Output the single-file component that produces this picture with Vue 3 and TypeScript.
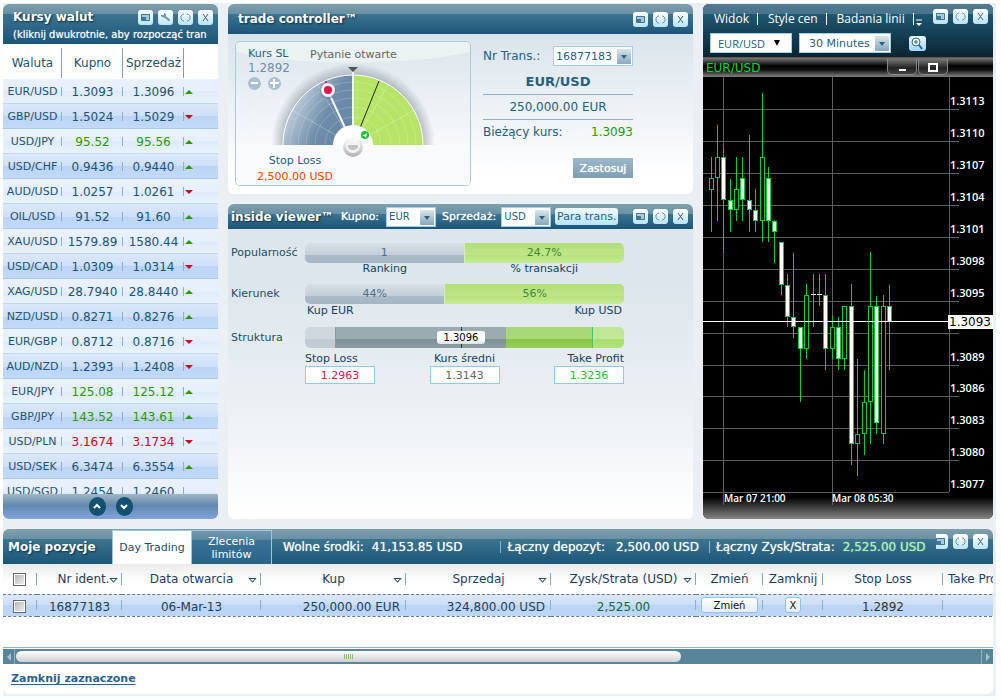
<script setup lang="ts">
import { ref } from 'vue'

interface Quote {
  pair: string
  buy: string
  sell: string
  dir: 'up' | 'down' | ''
  tone?: 'green' | 'red'
}

interface Candle {
  x: number
  high: number
  top: number
  bottom: number
  low: number
  filled: boolean
}

const quotes: Quote[] = [
  { pair: 'EUR/USD', buy: '1.3093', sell: '1.3096', dir: 'up' },
  { pair: 'GBP/USD', buy: '1.5024', sell: '1.5029', dir: 'down' },
  { pair: 'USD/JPY', buy: '95.52', sell: '95.56', dir: 'up', tone: 'green' },
  { pair: 'USD/CHF', buy: '0.9436', sell: '0.9440', dir: 'up' },
  { pair: 'AUD/USD', buy: '1.0257', sell: '1.0261', dir: 'down' },
  { pair: 'OIL/USD', buy: '91.52', sell: '91.60', dir: 'up' },
  { pair: 'XAU/USD', buy: '1579.89', sell: '1580.44', dir: 'up' },
  { pair: 'USD/CAD', buy: '1.0309', sell: '1.0314', dir: 'down' },
  { pair: 'XAG/USD', buy: '28.7940', sell: '28.8440', dir: 'up' },
  { pair: 'NZD/USD', buy: '0.8271', sell: '0.8276', dir: 'up' },
  { pair: 'EUR/GBP', buy: '0.8712', sell: '0.8716', dir: 'down' },
  { pair: 'AUD/NZD', buy: '1.2393', sell: '1.2408', dir: 'down' },
  { pair: 'EUR/JPY', buy: '125.08', sell: '125.12', dir: 'up', tone: 'green' },
  { pair: 'GBP/JPY', buy: '143.52', sell: '143.61', dir: 'up', tone: 'green' },
  { pair: 'USD/PLN', buy: '3.1674', sell: '3.1734', dir: 'down', tone: 'red' },
  { pair: 'USD/SEK', buy: '6.3474', sell: '6.3554', dir: 'up' },
  { pair: 'USD/SGD', buy: '1.2454', sell: '1.2460', dir: '' },
]

const rows: Array<[number, number, number, number, number, 0 | 1]> = [
  [8, 80, 101, 112, 155, 0],
  [14, 48, 80, 100, 144, 0],
  [20, 69, 80, 122, 176, 1],
  [27, 102, 123, 132, 155, 1],
  [33, 80, 112, 132, 144, 0],
  [39, 80, 101, 122, 144, 1],
  [46, 58, 123, 132, 155, 1],
  [52, 112, 133, 143, 155, 1],
  [59, 16, 80, 143, 165, 0],
  [65, 90, 101, 143, 165, 1],
  [71, 143, 144, 154, 186, 1],
  [78, 165, 165, 207, 218, 1],
  [84, 197, 208, 239, 250, 1],
  [90, 176, 240, 249, 261, 1],
  [97, 250, 250, 271, 325, 1],
  [103, 207, 218, 271, 282, 0],
  [122, 197, 218, 271, 293, 1],
  [129, 239, 250, 271, 282, 0],
  [135, 240, 250, 281, 293, 1],
  [141, 229, 229, 281, 293, 0],
  [148, 207, 229, 366, 388, 1],
  [154, 282, 357, 366, 399, 0],
  [161, 293, 325, 356, 378, 0],
  [167, 175, 229, 324, 367, 0],
  [173, 219, 229, 345, 357, 1],
  [180, 218, 229, 356, 367, 0],
  [186, 208, 229, 244, 293, 1],
]
const candles: Candle[] = rows.map(([x, high, top, bottom, low, f]) => ({
  x, high, top, bottom, low, filled: f === 1,
}))

const levels = [
  { y: 32, label: '1.3113' },
  { y: 64, label: '1.3110' },
  { y: 96, label: '1.3107' },
  { y: 128, label: '1.3104' },
  { y: 160, label: '1.3101' },
  { y: 192, label: '1.3098' },
  { y: 224, label: '1.3095' },
  { y: 256, label: '' },
  { y: 288, label: '1.3089' },
  { y: 319, label: '1.3086' },
  { y: 351, label: '1.3083' },
  { y: 383, label: '1.3080' },
  { y: 415, label: '1.3077' },
]

const rings = [28, 38, 47, 55, 63]
const popularity = ref(50)
const direction = ref(44)
const allSelected = ref(false)
const rowSelected = ref(false)
const stopLoss = ref('1.2963')
const average = ref('1.3143')
const takeProfit = ref('1.3236')
</script>

<template>
  <div class="page">
    <div class="desk">
      <main class="top">
        <section class="panel rates">
          <header class="bar rates-bar">
            <div class="bar-row">
              <h2>Kursy walut</h2>
              <div class="tools">
                <button class="tool" aria-label="Okno"><svg viewBox="0 0 15 15"><rect x="3" y="4" width="9" height="7" fill="#a9cadb" /><path d="M3.5 4.5h8v6h-8z" fill="none" stroke="#3f7893" /><path d="M4 7h4v3H4z" fill="#3f7893" /></svg></button>
                <button class="tool" aria-label="Ustawienia"><svg viewBox="0 0 15 15"><path d="M6 6l5 4" stroke="#6f93a8" stroke-width="2" stroke-linecap="round" /><path d="M3 5c0 2 2 3 4 2s1-4-1-4v2H4z" fill="#6f93a8" /></svg></button>
                <button class="tool" aria-label="Powiększ"><svg viewBox="0 0 15 15"><path d="M6 4H5L3 6v3l2 2h1M9 4h1l2 2v3l-2 2H9" fill="none" stroke="#6d93a8" /></svg></button>
                <button class="tool" aria-label="Zamknij"><svg viewBox="0 0 15 15"><path d="M5 4l5 7M10 4l-5 7" fill="none" stroke="#3f6276" /></svg></button>
              </div>
            </div>
            <p class="hint">(kliknij dwukrotnie, aby rozpocząć tran</p>
          </header>
          <div class="rates-list">
            <table class="quotes">
              <colgroup><col class="c1" /><col class="c2" /><col class="c2" /><col /></colgroup>
              <thead>
                <tr><th>Waluta</th><th>Kupno</th><th>Sprzedaż</th><th></th></tr>
              </thead>
              <tbody>
                <tr v-for="q in quotes" :key="q.pair" :class="q.tone">
                  <td class="pair">{{ q.pair }}</td>
                  <td class="num">{{ q.buy }}</td>
                  <td class="num">{{ q.sell }}</td>
                  <td><i v-if="q.dir" :class="['tick', q.dir]"></i></td>
                </tr>
              </tbody>
            </table>
          </div>
          <footer class="rates-foot">
            <button aria-label="W górę"><svg viewBox="0 0 17 19"><path d="M5 11l3-3 3 3" fill="none" stroke="#fff" stroke-width="2" /></svg></button>
            <button aria-label="W dół"><svg viewBox="0 0 17 19"><path d="M5 8l3 3 3-3" fill="none" stroke="#fff" stroke-width="2" /></svg></button>
          </footer>
        </section>

        <div class="middle">
          <section class="panel controller">
            <header class="bar">
              <h2>trade controller™</h2>
              <div class="tools">
                <button class="tool" aria-label="Okno"><svg viewBox="0 0 15 15"><rect x="3" y="4" width="9" height="7" fill="#a9cadb" /><path d="M3.5 4.5h8v6h-8z" fill="none" stroke="#3f7893" /><path d="M4 7h4v3H4z" fill="#3f7893" /></svg></button>
                <button class="tool" aria-label="Powiększ"><svg viewBox="0 0 15 15"><path d="M6 4H5L3 6v3l2 2h1M9 4h1l2 2v3l-2 2H9" fill="none" stroke="#6d93a8" /></svg></button>
                <button class="tool" aria-label="Zamknij"><svg viewBox="0 0 15 15"><path d="M5 4l5 7M10 4l-5 7" fill="none" stroke="#3f6276" /></svg></button>
              </div>
            </header>
            <div class="controller-body">
              <div class="dial">
                <svg class="dial-art" viewBox="0 0 234 144" aria-hidden="true">
                  <defs>
                    <linearGradient id="steel" x1="0" y1="0.2" x2="1" y2="0.7">
                      <stop offset="0.1" stop-color="#d0dbe5" /><stop offset="0.65" stop-color="#6c8ca9" /><stop offset="1" stop-color="#6687a4" />
                    </linearGradient>
                    <radialGradient id="halo" gradientUnits="userSpaceOnUse" cx="117" cy="103" r="82">
                      <stop offset="0.8" stop-color="#56636e" stop-opacity="0.5" /><stop offset="1" stop-color="#56636e" stop-opacity="0" />
                    </radialGradient>
                    <linearGradient id="knob" x1="0" y1="0" x2="0" y2="1">
                      <stop offset="0" stop-color="#fff" /><stop offset="1" stop-color="#b3b1b3" />
                    </linearGradient>
                    <clipPath id="upper"><rect x="0" y="0" width="234" height="103" /></clipPath>
                  </defs>
                  <path d="M0 0H234V10C170 24 64 24 0 10Z" fill="#edf5f3" fill-opacity="0.75" />
                  <rect x="0" y="103" width="234" height="41" fill="#f9fafb" />
                  <g clip-path="url(#upper)">
                    <circle cx="117" cy="103" r="82" fill="url(#halo)" />
                    <path d="M47 103A70 70 0 0 1 117 33V103Z" fill="url(#steel)" />
                    <path d="M117 33A70 70 0 0 1 187 103H117Z" fill="#b6e467" />
                    <circle v-for="r in rings" :key="r" cx="117" cy="103" :r="r" fill="none" stroke="#fff" stroke-opacity="0.2" />
                    <path d="M117 103L49 64M117 103L78 36M117 103L156 36M117 103L185 64" stroke="#fff" stroke-opacity="0.25" />
                    <circle cx="117" cy="103" r="70" fill="none" stroke="#fff" stroke-width="1" />
                  </g>
                  <path d="M117 30V90" stroke="#eef2f4" stroke-width="2" />
                  <path d="M112 25H122L117 30Z" fill="#555" />
                  <path d="M117 103L92 49" stroke="#f3f5f8" stroke-width="2" />
                  <circle cx="92" cy="49" r="8" fill="#55657a" fill-opacity="0.35" />
                  <circle cx="92" cy="48" r="7" fill="#f4f1f3" />
                  <circle cx="92" cy="48" r="4" fill="#e01350" />
                  <circle cx="90" cy="40" r="1" fill="#e01350" />
                  <path d="M124 86L143 39" stroke="#1c2a10" />
                  <g clip-path="url(#upper)"><circle cx="117" cy="103" r="20" fill="#fff" /></g>
                  <circle cx="129" cy="93" r="4" fill="#10c52d" />
                  <path d="M126 94l5-3-1 5-2-2z" fill="#fff" />
                  <circle cx="117" cy="105" r="10" fill="url(#knob)" />
                  <circle cx="117" cy="104" r="7" fill="#f4f3f4" />
                  <path d="M112 103h10v2a5 3 0 0 1-10 0z" fill="#c3c1c3" />
                </svg>
                <div class="dial-head">
                  <div class="dial-rate">
                    <span class="teal">Kurs SL</span>
                    <span class="rate">1.2892</span>
                    <div class="steps">
                      <button aria-label="Zmniejsz"><svg viewBox="0 0 13 13"><path d="M3 6h7" stroke="#fff" stroke-width="2" /></svg></button>
                      <button aria-label="Zwiększ"><svg viewBox="0 0 13 13"><path d="M2 6h9M6 2v9" stroke="#fff" stroke-width="2" /></svg></button>
                    </div>
                  </div>
                  <span class="question">Pytanie otwarte</span>
                </div>
                <div class="dial-foot">
                  <span class="teal">Stop Loss</span>
                  <span class="loss">2,500.00 USD</span>
                </div>
              </div>
              <form class="deal" @submit.prevent>
                <div class="deal-row">
                  <label for="deal-no">Nr Trans.:</label>
                  <span class="pick deal-pick">
                    <select id="deal-no"><option>16877183</option></select><i class="drop"></i>
                  </span>
                </div>
                <strong class="deal-pair">EUR/USD</strong>
                <span class="deal-sum">250,000.00 EUR</span>
                <div class="deal-row deal-now"><span>Bieżący kurs:</span><span class="green-text">1.3093</span></div>
                <button class="apply">Zastosuj</button>
              </form>
            </div>
          </section>

          <section class="panel viewer">
            <header class="bar viewer-bar">
              <h2>inside viewer™</h2>
              <label for="v-buy">Kupno:</label>
              <span class="pick small"><select id="v-buy"><option>EUR</option></select><i class="drop"></i></span>
              <label for="v-sell">Sprzedaż:</label>
              <span class="pick small"><select id="v-sell"><option>USD</option></select><i class="drop"></i></span>
              <button class="pair-btn">Para trans.</button>
              <div class="tools">
                <button class="tool" aria-label="Okno"><svg viewBox="0 0 15 15"><rect x="3" y="4" width="9" height="7" fill="#a9cadb" /><path d="M3.5 4.5h8v6h-8z" fill="none" stroke="#3f7893" /><path d="M4 7h4v3H4z" fill="#3f7893" /></svg></button>
                <button class="tool" aria-label="Powiększ"><svg viewBox="0 0 15 15"><path d="M6 4H5L3 6v3l2 2h1M9 4h1l2 2v3l-2 2H9" fill="none" stroke="#6d93a8" /></svg></button>
                <button class="tool" aria-label="Zamknij"><svg viewBox="0 0 15 15"><path d="M5 4l5 7M10 4l-5 7" fill="none" stroke="#3f6276" /></svg></button>
              </div>
            </header>
            <div class="viewer-body">
              <span class="v-label">Popularność</span>
              <div class="v-cell">
                <div class="meter"><span class="grey" :style="{ width: popularity + '%' }">1</span><span class="lime">24.7%</span></div>
                <div class="under halves"><span>Ranking</span><span>% transakcji</span></div>
              </div>
              <span class="v-label">Kierunek</span>
              <div class="v-cell">
                <div class="meter"><span class="grey" :style="{ width: direction + '%' }">44%</span><span class="lime">56%</span></div>
                <div class="under ends"><span>Kup EUR</span><span>Kup USD</span></div>
              </div>
              <span class="v-label low">Struktura</span>
              <div class="v-cell">
                <div class="meter structure">
                  <span class="s1"></span><span class="s2"><b>1.3096</b></span><span class="s3"></span><span class="s4"></span>
                </div>
                <div class="fields">
                  <div><label for="f-sl">Stop Loss</label><input id="f-sl" v-model="stopLoss" class="crimson" /></div>
                  <div class="mid"><label for="f-av">Kurs średni</label><input id="f-av" v-model="average" class="dim" /></div>
                  <div class="end"><label for="f-tp">Take Profit</label><input id="f-tp" v-model="takeProfit" class="bright" /></div>
                </div>
              </div>
            </div>
          </section>
        </div>

        <section class="panel chart">
          <header class="chart-bar">
            <div class="menu-row">
              <nav>
                <button>Widok</button><button>Style cen</button><button>Badania linii</button>
                <button class="more" aria-label="Więcej"><svg viewBox="0 0 8 8"><path d="M1 1h6" stroke="#fff" /><path d="M1 4h6L4 7z" fill="#fff" /></svg></button>
              </nav>
              <div class="tools">
                <button class="tool" aria-label="Okno"><svg viewBox="0 0 15 15"><rect x="3" y="4" width="9" height="7" fill="#a9cadb" /><path d="M3.5 4.5h8v6h-8z" fill="none" stroke="#3f7893" /><path d="M4 7h4v3H4z" fill="#3f7893" /></svg></button>
                <button class="tool" aria-label="Powiększ"><svg viewBox="0 0 15 15"><path d="M6 4H5L3 6v3l2 2h1M9 4h1l2 2v3l-2 2H9" fill="none" stroke="#6d93a8" /></svg></button>
                <button class="tool" aria-label="Zamknij"><svg viewBox="0 0 15 15"><path d="M5 4l5 7M10 4l-5 7" fill="none" stroke="#3f6276" /></svg></button>
              </div>
            </div>
            <div class="pick-row">
              <span class="pick symbol"><select aria-label="Instrument"><option>EUR/USD</option></select><i class="tri"></i></span>
              <span class="pick period"><select aria-label="Okres"><option>30 Minutes</option></select><i class="drop"></i></span>
              <button class="zoom" aria-label="Przybliż"><svg viewBox="0 0 17 15"><circle cx="7" cy="6" r="4" fill="#fff" stroke="#2a6a8e" /><path d="M5 6h4M7 4v4" stroke="#2a6a8e" /><path d="M10 9l3 4" stroke="#2a6a8e" stroke-width="2" /></svg></button>
            </div>
          </header>
          <div class="chart-title">
            <span>EUR/USD</span>
            <div>
              <button aria-label="Minimalizuj"><svg viewBox="0 0 28 15"><path d="M11 11h7" stroke="#fff" stroke-width="2" /></svg></button>
              <button aria-label="Maksymalizuj"><svg viewBox="0 0 28 15"><rect x="10" y="5" width="8" height="7" fill="none" stroke="#fff" stroke-width="2" /></svg></button>
            </div>
          </div>
          <svg class="plot" viewBox="0 0 290 441" preserveAspectRatio="xMinYMin meet" role="img" aria-label="EUR/USD">
            <g fill="#5e5e5e" shape-rendering="crispEdges">
              <rect v-for="l in levels" :key="l.y" x="0" :y="l.y" :width="l.y === 415 ? 246 : 256" height="1" />
              <rect x="20" y="0" width="1" height="428" />
              <rect x="129" y="0" width="1" height="428" />
              <rect x="246" y="0" width="1" height="415" />
            </g>
            <g shape-rendering="crispEdges">
              <g v-for="c in candles" :key="c.x">
                <rect :x="c.x" :y="c.high" width="1" :height="c.low - c.high" fill="#00d030" />
                <rect :x="c.x - 2" :y="c.top" width="5" :height="c.bottom - c.top + 1" fill="#00d030" />
                <rect :x="c.x - 1" :y="c.top + 1" width="3" :height="c.bottom - c.top - 1" :fill="c.filled ? '#fff' : '#000'" />
              </g>
              <rect x="110" y="197" width="1" height="53" fill="#00d030" />
              <rect x="116" y="197" width="1" height="32" fill="#00d030" />
              <rect x="108" y="217" width="5" height="1" fill="#fff" />
              <rect x="114" y="217" width="5" height="1" fill="#fff" />
              <rect x="0" y="244" width="246" height="1" fill="#fff" />
              <rect x="245" y="238" width="45" height="14" fill="#fff" />
            </g>
            <g class="scale">
              <text v-for="l in levels" :key="l.y" x="247" :y="l.y - 4">{{ l.label }}</text>
            </g>
            <g class="scale times">
              <text x="21" y="425">Mar 07 21:00</text>
              <text x="129" y="425">Mar 08 05:30</text>
            </g>
            <text class="now" x="246" y="249">1.3093</text>
          </svg>
        </section>
      </main>

      <section class="panel positions">
        <header class="bar positions-bar">
          <h2>Moje pozycje</h2>
          <button class="tab active">Day Trading</button>
          <button class="tab">Zlecenia<br />limitów</button>
          <div class="sums">
            <span class="sum"><span>Wolne środki:</span><span>41,153.85 USD</span></span>
            <span class="sum deposit"><span>Łączny depozyt:</span><span>2,500.00 USD</span></span>
            <span class="sum result"><span>Łączny Zysk/Strata:</span><span class="gain">2,525.00 USD</span></span>
          </div>
          <div class="tools">
            <button class="tool cut" aria-label="Okno"><svg viewBox="0 0 15 15"><rect x="3" y="4" width="9" height="7" fill="#a9cadb" /><path d="M3.5 4.5h8v6h-8z" fill="none" stroke="#3f7893" /><path d="M4 7h4v3H4z" fill="#3f7893" /></svg></button>
            <button class="tool" aria-label="Powiększ"><svg viewBox="0 0 15 15"><path d="M6 4H5L3 6v3l2 2h1M9 4h1l2 2v3l-2 2H9" fill="none" stroke="#6d93a8" /></svg></button>
            <button class="tool" aria-label="Zamknij"><svg viewBox="0 0 15 15"><path d="M5 4l5 7M10 4l-5 7" fill="none" stroke="#3f6276" /></svg></button>
          </div>
        </header>
        <div class="sheet">
          <table class="trades">
            <colgroup>
              <col class="w34" /><col class="w85" /><col class="w139" /><col class="w145" /><col class="w145" /><col class="w145" /><col class="w67" /><col class="w60" /><col class="w120" /><col class="w90" />
            </colgroup>
            <thead>
              <tr>
                <th><input v-model="allSelected" type="checkbox" aria-label="Zaznacz wszystkie" /></th>
                <th class="ident"><div>Nr ident.<i class="sort"></i></div></th>
                <th><div>Data otwarcia<i class="sort"></i></div></th>
                <th><div>Kup<i class="sort"></i></div></th>
                <th><div>Sprzedaj<i class="sort"></i></div></th>
                <th><div>Zysk/Strata (USD)<i class="sort"></i></div></th>
                <th>Zmień</th>
                <th>Zamknij</th>
                <th>Stop Loss</th>
                <th class="left">Take Profit</th>
              </tr>
            </thead>
            <tbody>
              <tr>
                <td><input v-model="rowSelected" type="checkbox" aria-label="Zaznacz 16877183" /></td>
                <td>16877183</td>
                <td>06-Mar-13</td>
                <td class="right">250,000.00 EUR</td>
                <td class="right">324,800.00 USD</td>
                <td class="profit">2,525.00</td>
                <td><button class="mini change">Zmień</button></td>
                <td><button class="mini">X</button></td>
                <td class="stop">1.2892</td>
                <td></td>
              </tr>
            </tbody>
          </table>
        </div>
        <div class="scroller">
          <button class="sc-l" aria-label="Przewiń w lewo"></button>
          <div class="track"><div class="thumb"><i></i><i></i><i></i><i></i><i></i></div></div>
          <button class="sc-r" aria-label="Przewiń w prawo"></button>
        </div>
        <div class="foot-link"><a href="#">Zamknij zaznaczone</a></div>
      </section>
    </div>
  </div>
</template>

<style>
html, body { background: #fff; }
</style>

<style scoped>
* { box-sizing: border-box; }
.page {
  height: 100vh;
  min-height: 640px;
  padding: 3px 5px 4px 3px;
  font-family: "DejaVu Sans", Verdana, sans-serif;
  font-size: 12px;
  line-height: 16px;
  color: #1d5475;
}
.desk {
  height: 100%;
  padding: 1px 3px 2px 0;
  display: flex;
  flex-direction: column;
  gap: 10px;
  background: #eaeff3;
}
button, input, select { font-family: inherit; margin: 0; padding: 0; border: 0; color: inherit; }
button { cursor: pointer; }
svg { display: block; }
.top {
  flex: 1;
  min-height: 0;
  display: grid;
  grid-template-columns: 215fr 465fr 290fr;
  grid-template-rows: minmax(0, 1fr);
  gap: 10px;
}
.panel { border-radius: 6px; overflow: hidden; min-width: 0; display: flex; flex-direction: column; }
.bar {
  flex: none;
  height: 30px;
  padding: 0 5px 0 10px;
  display: flex;
  align-items: center;
  color: #fff;
  background: linear-gradient(#7fa0ad 0, #6990a3 10px, #3d7590 10px, #1b5578 100%);
}
h2 {
  margin: 0;
  font-size: 12px;
  line-height: 16px;
  font-weight: bold;
  white-space: nowrap;
  text-shadow: 1px 1px 2px #0a2c44;
}
.tools { margin-left: auto; display: flex; gap: 5px; }
.tool {
  width: 15px;
  height: 15px;
  border-radius: 3px;
  background: linear-gradient(#fff, #b9e4fa);
  overflow: hidden;
}
.tool svg { width: 15px; height: 15px; }

/* rates */
.rates-bar { height: 40px; display: block; padding: 5px 5px 0 10px; }
.bar-row { display: flex; align-items: center; }
.hint {
  margin: 2px 4px 0 0;
  font-size: 10px;
  line-height: 16px;
  white-space: nowrap;
  overflow: hidden;
  text-shadow: 0 0 1px rgba(255, 255, 255, 0.6);
}
.rates-list { flex: 1; min-height: 0; overflow: hidden; background: #fff; }
.quotes { width: 100%; table-layout: fixed; border-collapse: collapse; text-align: center; }
.c1 { width: 59px; }
.c2 { width: 61px; }
.quotes th { height: 35px; padding: 3px 0 0; font-weight: normal; }
.quotes th:not(:last-child) { background: linear-gradient(#7ba0b4, #7ba0b4) right 4px / 1px 30px no-repeat; }
.quotes td { height: 25px; padding: 0; }
.quotes td:not(:last-child) { background: linear-gradient(#8fb0c4, #8fb0c4) right 8px / 1px 9px no-repeat; }
.quotes td:last-child { text-align: left; }
.quotes tbody tr { background: linear-gradient(#e9f1fd 0, #e6effc 50%, #ddeafa 50%, #e9f3fd 24px, #bcd8f8 24px); }
.quotes tbody tr:nth-child(even) { background: linear-gradient(#dce8fa 0, #cddff8 50%, #bbd4f6 50%, #c2d9f8 24px, #a6c8f3 24px); }
.quotes .pair { font-size: 11px; }
.green .num { color: #2b9a00; }
.red .num { color: #d0001a; }
.tick { display: block; width: 0; height: 0; margin-left: 1px; border: 4px solid transparent; border-top-width: 0; border-bottom: 4px solid #2b9a00; }
.tick.down { border-top: 4px solid #d0001a; border-bottom-width: 0; }
.rates-foot {
  flex: none;
  height: 25px;
  display: flex;
  justify-content: center;
  align-items: center;
  gap: 10px;
  background: linear-gradient(#a2b6c3, #6288b0 45%, #7fa4dc);
}
.rates-foot button { width: 17px; height: 19px; border-radius: 50%; background: #14506f; }

/* middle */
.middle { min-width: 0; display: flex; flex-direction: column; gap: 10px; }
.controller { flex: none; }
.controller-body { height: 160px; padding: 7px 60px 8px 7px; display: flex; justify-content: space-between; background: linear-gradient(#dae4eb, #fff 90%); }
.dial { position: relative; flex: none; width: 236px; border: 1px solid #a8cadc; border-radius: 5px; overflow: hidden; display: flex; flex-direction: column; font-size: 11px; }
.dial-art { position: absolute; top: 0; left: 0; width: 234px; height: 144px; }
.dial-head { position: relative; display: flex; gap: 20px; padding: 5px 0 0 12px; }
.dial-rate { display: flex; flex-direction: column; line-height: 14px; }
.teal { color: #24607f; }
.rate { font-size: 12px; color: #6f8eab; }
.question { color: #666; line-height: 15px; }
.steps { display: flex; gap: 7px; padding-top: 2px; }
.steps button { width: 13px; height: 13px; border-radius: 50%; background: #a9bfd3; }
.dial-foot { position: relative; width: 118px; margin-top: auto; display: flex; flex-direction: column; text-align: center; line-height: 16px; }
.loss { color: #ff3c00; }
.deal { width: 150px; padding-top: 5px; display: flex; flex-direction: column; color: #24607f; }
.deal-row { display: flex; justify-content: space-between; align-items: center; white-space: nowrap; }
.pick { position: relative; display: block; height: 20px; }
.pick select {
  display: block;
  width: 100%;
  height: 100%;
  padding: 0 2px;
  appearance: none;
  border: 1px solid #9bd0f0;
  border-radius: 0;
  background: #fff;
  color: #24607f;
  font-size: 11px;
}
.drop { position: absolute; right: 2px; top: 3px; width: 14px; height: 15px; background: linear-gradient(#dbe4ea, #86a8bc); pointer-events: none; }
.drop::after { content: ""; position: absolute; left: 4px; top: 6px; border: 3px solid transparent; border-top: 4px solid #2b6180; border-bottom: 0; }
.deal-pick { width: 80px; }
.deal-pair { font-size: 13px; line-height: 24px; padding-top: 4px; text-align: center; border-bottom: 1px solid #90afc4; }
.deal-sum { line-height: 24px; text-align: center; border-bottom: 1px solid #90afc4; }
.deal-now { line-height: 24px; }
.green-text { color: #2b9a00; }
.apply { align-self: flex-end; width: 60px; height: 20px; margin-top: 14px; font-size: 11px; color: #fff; background: linear-gradient(#9db8c9, #7d9fb4); text-shadow: 0 0 1px #fff; }

.viewer { flex: 1; min-height: 0; background: linear-gradient(#dde6ec, #dde6ec 80px, #eaeff3 190px, #fff); }
.viewer-bar { height: 25px; padding-left: 3px; font-size: 11px; }
.viewer-bar label { margin: 0 7px 0 8px; text-shadow: 0 0 1px #fff; }
.viewer-bar label ~ label { margin: 0 5px 0 6px; }
.pick.small { width: 50px; flex: none; }
.pick.small select { font-size: 10px; }
.pair-btn { flex: none; width: 63px; height: 17px; margin-left: 4px; border-radius: 3px; font-size: 11px; white-space: nowrap; color: #24607f; background: linear-gradient(#f2faff, #b9e4fa); }
.viewer-body { padding: 14px 69px 0 3px; display: grid; grid-template-columns: 74px 1fr; font-size: 11px; color: #143f63; }
.v-label { padding-top: 2px; color: #1d4d66; }
.v-label.low { padding-top: 4px; }
.v-cell { min-width: 0; padding-bottom: 9px; }
.meter { display: flex; height: 20px; line-height: 20px; border-radius: 5px; overflow: hidden; text-align: center; }
.grey { color: #4b6d88; background: linear-gradient(#d7dfe6, #c3ced8 60%, #adbbc8 60%, #a5b5c4); border-right: 1px solid #d9e9c9; }
.lime { flex: 1; color: #3f8436; background: linear-gradient(#b2df76, #bfe68a 60%, #b5e27a 60%, #c6ec96); }
.under { display: flex; line-height: 12px; }
.halves span { flex: 1; text-align: center; }
.ends { justify-content: space-between; padding: 1px 2px 0; }
.v-cell:last-child { padding-top: 1px; }
.structure { height: 21px; }
.s1 { flex: 30; background: linear-gradient(#cfd8df 55%, #c0cbd4 55%); }
.s2 {
  flex: 172;
  display: flex;
  align-items: center;
  justify-content: center;
  border-left: 1px solid #d97391;
  background: linear-gradient(#333, #333) 125px 0 / 1px 100% no-repeat, linear-gradient(#9aabb1 55%, #7b9196 55%, #8b9da2);
}
.s2 b { width: 48px; height: 13px; margin-left: 80px; border-radius: 3px; line-height: 13px; font-size: 10px; font-weight: normal; color: #000; background: linear-gradient(#fff 60%, #dfe3ea); }
.s3 { flex: 87; border-right: 1px solid #43c46f; background: linear-gradient(#a8d776 55%, #88c440 55%, #96cc55); }
.s4 { flex: 31; background: linear-gradient(#bfe796 55%, #a8dc6c 55%, #b3e27c); }
.fields { display: flex; justify-content: space-between; padding-top: 3px; }
.fields > div { display: flex; flex-direction: column; line-height: 15px; }
.fields .mid { align-items: center; }
.fields .end { align-items: flex-end; }
.fields input { width: 70px; height: 18px; border: 1px solid #8ccbee; background: #fff; text-align: center; font-size: 11px; }
.crimson { color: #e01350; }
.dim { color: #666; }
.bright { color: #10c52d; }

/* chart */
.chart { background: #000; }
.chart-bar { flex: none; height: 52px; padding: 5px 5px 0 1px; font-family: "Open Sans", sans-serif; background: linear-gradient(#527c92 0, #48738a 10px, #1e5873 10px, #0a2532 100%); }
.menu-row { display: flex; align-items: center; height: 18px; }
.menu-row nav { display: flex; align-items: center; padding-top: 2px; }
nav button { height: 16px; padding: 0 9px 0 10px; background: none; color: #fff; font-size: 12px; line-height: 16px; white-space: nowrap; }
nav button:not(:last-child) { background: linear-gradient(#fff, #fff) right 2px / 1px 12px no-repeat; }
nav .more { width: 8px; height: 8px; padding: 0; margin: 8px 0 0 1px; }
.menu-row .tools { align-self: flex-start; }
.pick-row { display: flex; align-items: center; padding: 6px 0 0 6px; }
.symbol { width: 82px; }
.symbol select { padding-left: 7px; font-family: "Open Sans", sans-serif; }
.tri { position: absolute; right: 12px; top: 7px; border: 3px solid transparent; border-top: 6px solid #000; border-bottom: 0; pointer-events: none; }
.period { width: 92px; margin: 0 18px 0 7px; font-family: "DejaVu Sans", Verdana, sans-serif; }
.period select { padding-left: 9px; }
.zoom { width: 17px; height: 15px; border-radius: 3px; background: linear-gradient(#e8f7ff, #a4d8f4); }
.chart-title {
  flex: none;
  height: 21px;
  padding: 1px 45px 0 3px;
  display: flex;
  justify-content: space-between;
  line-height: 22px;
  color: #00d830;
  background: linear-gradient(#000 0, #777 2px, #000 10px, #111 14px, #777 20px);
}
.chart-title div { display: flex; gap: 1px; }
.chart-title button { width: 30px; height: 16px; margin-top: 2px; border: 1px solid #8a8a8a; border-top: 0; border-radius: 0 0 5px 5px; background: linear-gradient(#777, #222 60%, #444); }
.chart-title svg { width: 28px; height: 15px; }
.plot { width: 100%; flex: 1; min-height: 0; background: linear-gradient(to top, #858585, #000 22px); }
.scale { font-family: "Open Sans", sans-serif; font-weight: 600; font-size: 11px; fill: #fff; }
.scale.times { font-size: 10px; }
.now { font-size: 12px; fill: #000; }

/* positions */
.positions { flex: none; background: #fff; color: #1a3f5f; }
.positions-bar { height: 35px; padding: 0 5px; }
.positions-bar h2 { width: 104px; }
.tab { align-self: stretch; width: 80px; flex: none; margin-top: 1px; font-size: 11px; line-height: 13px; color: #fff; border: solid #9cc6e6; border-width: 1px 1px 0 0; background: linear-gradient(#7297ae 0, #5d88a2 9px, #3a7396 9px, #2a6388); }
.tab.active { color: #1a4e6e; border-width: 1px 1px 0 1px; background: #fff; }
.sums { flex: 1; min-width: 0; overflow: hidden; display: flex; padding-left: 11px; white-space: nowrap; text-shadow: 0 0 1px rgba(255, 255, 255, 0.7); }
.sum { display: flex; gap: 8px; }
.sum + .sum { padding-left: 7px; background: linear-gradient(#79b7dd, #79b7dd) left 2px / 1px 12px no-repeat; }
.sum.deposit { gap: 11px; margin-left: 38px; }
.sum.result { margin-left: 10px; }
.gain { color: #a5f7a0; }
.positions-bar .tools { align-self: flex-start; margin-top: 5px; margin-left: 3px; }
.tool.cut { width: 12px; border-radius: 0 3px 3px 0; }
.tool.cut svg { margin-left: -3px; }
.sheet { overflow: hidden; height: 84px; border-bottom: 1px solid #8db6d6; }
.trades { width: 1030px; table-layout: fixed; border-collapse: collapse; text-align: center; }
.w34 { width: 34px; }
.w85 { width: 85px; }
.w139 { width: 139px; }
.w145 { width: 145px; }
.w67 { width: 67px; }
.w60 { width: 60px; }
.w120 { width: 120px; }
.w90 { width: 90px; }
.trades th { height: 30px; padding: 0; font-weight: normal; color: #1a3f5f; white-space: nowrap; }
.trades th:not(:last-child) { background: linear-gradient(#82a8bd, #82a8bd) right 9px / 1px 12px no-repeat; }
.trades thead tr { background: linear-gradient(#ebebeb, #fff 60%); }
.trades th div { position: relative; }
.trades .ident div { padding-left: 8px; }
.trades .left { text-align: left; padding-left: 5px; }
.trades td { height: 22px; padding: 3px 0 0; border: dashed #66788c; border-width: 1px 0; }
.trades td:not(:last-child) { background: linear-gradient(#8fb0c4, #8fb0c4) right 5px / 1px 10px no-repeat; }
.trades tbody tr { background: linear-gradient(#dce8fb, #cbdef8 50%, #bad4f7 50%, #bdd6f8); }
.trades .right { text-align: right; padding-right: 6px; }
.trades .profit { color: #0f6b3c; }
.trades .stop { color: #333; }
.sort { position: absolute; right: 4px; top: 7px; width: 9px; height: 5px; background: #1f4f6a; clip-path: polygon(0 0, 100% 0, 50% 100%); }
.sort::after { content: ""; position: absolute; inset: 1px 2px; background: #fff; clip-path: polygon(0 0, 100% 0, 50% 80%); }
.trades input { appearance: none; display: block; width: 13px; height: 13px; margin: 2px 0 0 10px; border: 1px solid #666; outline: 0; box-shadow: inset 0 0 0 1px #fff; background: linear-gradient(135deg, #b2b2b2, #f2f2f2); }
.trades td input { margin-top: -1px; }
.mini { display: block; height: 16px; width: 16px; margin: -3px auto 0; border: 1px solid #8fbfee; border-radius: 3px; font-size: 10px; line-height: 13px; color: #111; background: linear-gradient(#fff, #e3edf9); }
.mini.change { width: 57px; }
.scroller { height: 15px; margin-top: 1px; display: flex; background: #57869a; }
.sc-l, .sc-r { position: relative; width: 12px; background: none; border-right: 1px solid #8fb2c1; }
.sc-r { border-right: 0; border-left: 1px solid #8fb2c1; }
.sc-l::after, .sc-r::after { content: ""; position: absolute; left: 4px; top: 4px; border: 4px solid transparent; border-right-color: #a7c2cd; border-left: 0; }
.sc-r::after { border-left: 4px solid #a7c2cd; border-right: 0; }
.track { flex: 1; padding: 2px 1px; }
.thumb { width: 69%; height: 11px; display: flex; gap: 1px; align-items: center; justify-content: center; border-radius: 6px; background: linear-gradient(#fff, #cfcfcf); }
.thumb i { width: 1px; height: 5px; background: #8ab878; }
.foot-link { height: 30px; padding: 7px 8px 0; font-size: 11px; }
.foot-link a { color: #2a6191; font-weight: bold; text-underline-offset: 2px; }
</style>
